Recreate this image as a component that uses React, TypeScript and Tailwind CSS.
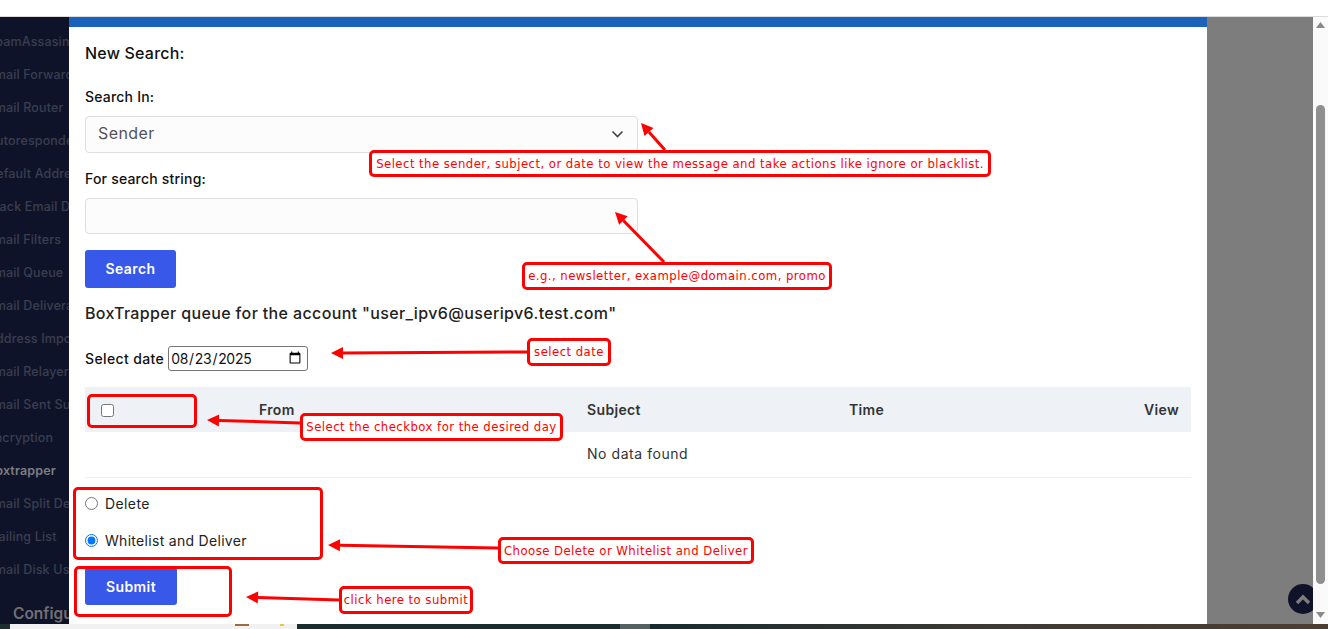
import React from "react";

const sidebarItems = [
  "SpamAssasin",
  "Email Forwarders",
  "Email Router",
  "Autoresponders",
  "Default Address",
  "Track Email Delivery",
  "Email Filters",
  "Email Queue",
  "Email Deliverability",
  "Address Importer",
  "Email Relayers",
  "Email Sent Summary",
  "Encryption",
  "Boxtrapper",
  "Email Split Delivery",
  "Mailing List",
  "Email Disk Usage",
];

const arrows: [number, number, number, number][] = [
  [641, 123, 665, 150],
  [615, 212, 664, 262],
  [331, 353, 527, 352],
  [207, 420, 300, 423],
  [328, 545, 498, 548],
  [246, 597, 339, 600],
];

function Arrow({ d }: { d: [number, number, number, number] }) {
  const [x1, y1, x2, y2] = d;
  const len = Math.hypot(x2 - x1, y2 - y1);
  const ux = (x2 - x1) / len;
  const uy = (y2 - y1) / len;
  const bx = x1 + ux * 12;
  const by = y1 + uy * 12;
  const pts = `${x1},${y1} ${bx - uy * 6},${by + ux * 6} ${bx + uy * 6},${by - ux * 6}`;
  return (
    <g>
      <line x1={bx} y1={by} x2={x2} y2={y2} stroke="#ff0000" strokeWidth={3} />
      <polygon points={pts} fill="#ff0000" />
    </g>
  );
}

const note =
  "absolute flex items-center justify-center whitespace-nowrap rounded-[5px] border-[3px] border-[#ff0000] bg-white text-[13px] tracking-[0.45px] text-[#ff0000] font-['DejaVu_Sans_Condensed','DejaVu_Sans',sans-serif]";
const frame = "absolute rounded-[5px] border-[3px] border-[#ff0000]";

export default function App() {
  return (
    <div className="relative flex h-[629px] w-[1328px] flex-col overflow-hidden bg-white font-['Inter','Noto_Sans',sans-serif]">
      <div className="h-[17px] shrink-0 border-b border-[#dcdcdc] bg-white" />

      <div className="flex h-[607px] shrink-0">
        <aside className="flex w-[69px] shrink-0 flex-col overflow-hidden bg-[#0f1329]">
          <ul className="ml-[-13px] flex flex-col pt-[9px]">
            {sidebarItems.map((item) => (
              <li
                key={item}
                className={
                  item === "Boxtrapper"
                    ? "flex h-[33px] items-center whitespace-nowrap text-[12.5px] font-semibold tracking-[0.15px] text-[#7d7e80]"
                    : "flex h-[33px] items-center whitespace-nowrap text-[12.5px] font-medium tracking-[0.15px] text-[#3a3e50]"
                }
              >
                {item}
              </li>
            ))}
          </ul>
          <div className="ml-[13px] mt-[15px] whitespace-nowrap text-[15.5px] font-semibold text-[#707074]">
            Configure
          </div>
        </aside>

        <main className="h-[605px] w-[1138px] shrink-0 rounded-b-[5px] bg-white">
          <div className="h-[10px] bg-[#1b62bd]" />
          <div className="px-4">
            <h2 className="mt-[16px] text-[16px] font-medium leading-[20px] tracking-[0.2px] text-[#111]">New Search:</h2>
            <label className="mt-[24px] block text-[14px] font-medium leading-[20px] tracking-[0.2px] text-[#111]">Search In:</label>
            <div className="relative mt-[9px] w-[553px]">
              <select className="block h-[37px] w-full appearance-none rounded-[4px] border border-[#dedede] bg-[#fcfcfc] px-3 pb-[4px] text-[16px] tracking-[0.4px] text-[#555]">
                <option>Sender</option>
              </select>
              <svg className="absolute right-[14px] top-[14px]" width="13" height="9" viewBox="0 0 13 9" fill="none">
                <path d="M1.5 1.5 L6.5 6.5 L11.5 1.5" stroke="#444" strokeWidth="1.6" />
              </svg>
            </div>
            <label className="mt-[16px] block text-[14px] font-medium leading-[20px] tracking-[0.2px] text-[#111]">For search string:</label>
            <input className="mt-[9px] block h-[36px] w-[553px] rounded-[4px] border border-[#dedede] bg-[#fcfcfc]" />
            <button className="mt-[16px] block h-[38px] w-[91px] rounded-[3px] bg-[#3858e9] pb-[1px] text-[14px] font-semibold tracking-[0.4px] text-white">Search</button>
            <h3 className="mt-[15px] text-[16px] font-medium leading-[20px] tracking-[0.36px] text-[#222]">
              BoxTrapper queue for the account "user_ipv6@useripv6.test.com"
            </h3>
            <div className="mt-[23px] flex h-[25px] items-center">
              <span className="pb-[1px] text-[14px] font-medium tracking-[0.37px] text-[#111]">Select date</span>
              <input
                type="date"
                defaultValue="2025-08-23"
                className="ml-[4px] h-[25px] w-[140px] rounded-[3px] border border-[#767676] bg-white pb-[1px] pl-[1px] pr-[3px] text-[14px] tracking-[-0.3px] text-[#111]"
              />
            </div>
            <div className="mt-[16px] grid h-[45px] grid-cols-[174px_328px_262px_1fr] items-center bg-[#eef1f6] pb-[1px] text-[14px] font-semibold tracking-[0.35px] text-[#333]">
              <div className="flex items-center pl-[16px] pt-[2px]">
                <input type="checkbox" className="h-[13px] w-[13px]" />
              </div>
              <div>From</div>
              <div>Subject</div>
              <div className="pr-[12px] text-right">
                <div className="flex justify-between">
                  <span>Time</span>
                  <span>View</span>
                </div>
              </div>
            </div>
            <div className="h-[46px] border-b border-[#eeeeee] pl-[502px] pt-[12px] text-[14px] leading-[20px] tracking-[0.55px] text-[#333]">
              No data found
            </div>
            <div className="mt-[15px] flex h-[20px] items-center">
              <input type="radio" name="action" className="m-0 h-[13px] w-[13px]" />
              <span className="ml-[7px] text-[14px] tracking-[0.4px] text-[#222]">Delete</span>
            </div>
            <div className="mt-[17px] flex h-[20px] items-center">
              <input type="radio" name="action" defaultChecked className="m-0 h-[13px] w-[13px]" />
              <span className="ml-[7px] text-[14px] tracking-[0.3px] text-[#222]">Whitelist and Deliver</span>
            </div>
            <button className="mt-[17px] block h-[38px] w-[92px] rounded-[3px] bg-[#3858e9] text-[14px] font-semibold tracking-[0.4px] text-white">Submit</button>
          </div>
        </main>

        <div className="flex-1 bg-[#7d7d7d]" />

        <div className="relative z-10 flex w-[15px] shrink-0 flex-col items-center bg-[#fafafa]">
          <svg className="mt-[5px]" width="9" height="6" viewBox="0 0 9 6">
            <polygon points="4.5,0 9,6 0,6" fill="#8a8a8a" />
          </svg>
          <div className="mt-[77px] h-[479px] w-[9px] rounded-full bg-[#8f8f8f]" />
          <svg className="mt-[28px]" width="9" height="6" viewBox="0 0 9 6">
            <polygon points="0,0 9,0 4.5,6" fill="#8a8a8a" />
          </svg>
        </div>
      </div>

      <div className="flex h-[5px] shrink-0">
        <div className="w-[10px] bg-[#1c2e30]" />
        <div className="relative w-[287px] bg-[#f1f1f1]">
          <div className="absolute left-[225px] top-0 h-[2px] w-[14px] bg-[#9c6b43]" />
          <div className="absolute left-[270px] top-0 h-[2px] w-[4px] bg-[#e7c93c]" />
        </div>
        <div className="w-[323px] bg-[#1a2c2e]" />
        <div className="w-[30px] bg-[#556060]" />
        <div className="flex-1 bg-linear-to-r from-[#172b2e] via-[#3d3a33] to-[#4d3e33]" />
      </div>

      {/* scroll-to-top button */}
      <div className="absolute left-[1288px] top-[584px] flex h-[30px] w-[30px] items-center justify-center rounded-full bg-[#0f1329]">
        <svg width="16" height="11" viewBox="0 0 16 11" fill="none">
          <path d="M2 9 L8 3 L14 9" stroke="#7d7d7d" strokeWidth="3.4" />
        </svg>
      </div>

      {/* annotation layer */}
      <svg className="pointer-events-none absolute left-0 top-0" width="1328" height="629">
        {arrows.map((a) => (
          <Arrow key={a.join()} d={a} />
        ))}
      </svg>
      <div className={`${frame} left-[87px] top-[394px] h-[34px] w-[110px]`} />
      <div className={`${frame} left-[73px] top-[487px] h-[73px] w-[250px]`} />
      <div className={`${frame} left-[74px] top-[566px] h-[51px] w-[158px]`} />
      <div className={`${note} left-[369px] top-[150px] h-[27px] w-[622px]`}>
        Select the sender, subject, or date to view the message and take actions like ignore or blacklist.
      </div>
      <div className={`${note} left-[522px] top-[262px] h-[28px] w-[310px]`}>
        e.g., newsletter, example@domain.com, promo
      </div>
      <div className={`${note} left-[527px] top-[338px] h-[28px] w-[84px]`}>select date</div>
      <div className={`${note} left-[300px] top-[413px] h-[28px] w-[263px]`}>Select the checkbox for the desired day</div>
      <div className={`${note} left-[498px] top-[537px] h-[27px] w-[256px]`}>Choose Delete or Whitelist and Deliver</div>
      <div className={`${note} left-[339px] top-[586px] h-[28px] w-[134px]`}>click here to submit</div>
    </div>
  );
}
